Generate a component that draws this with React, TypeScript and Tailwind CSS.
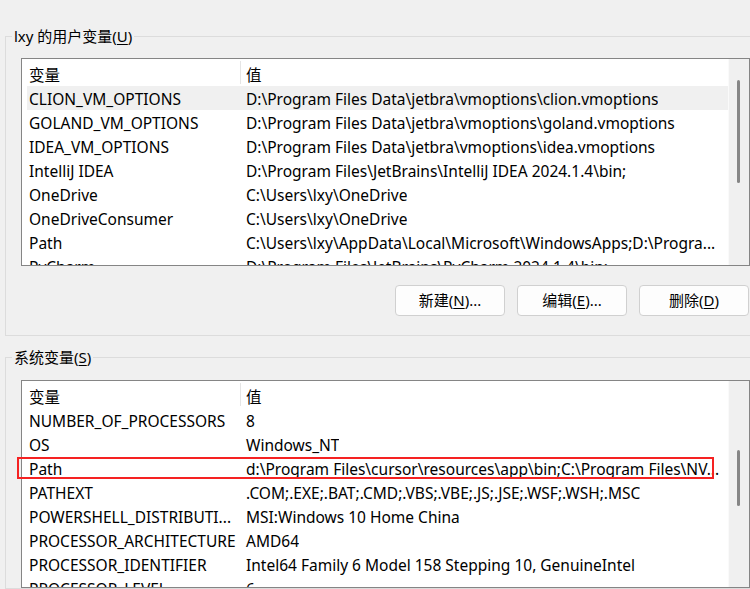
import React from 'react';

type Row = { name: string; value: string };

const userVars: Row[] = [
  { name: 'CLION_VM_OPTIONS', value: 'D:\\Program Files Data\\jetbra\\vmoptions\\clion.vmoptions' },
  { name: 'GOLAND_VM_OPTIONS', value: 'D:\\Program Files Data\\jetbra\\vmoptions\\goland.vmoptions' },
  { name: 'IDEA_VM_OPTIONS', value: 'D:\\Program Files Data\\jetbra\\vmoptions\\idea.vmoptions' },
  { name: 'IntelliJ IDEA', value: 'D:\\Program Files\\JetBrains\\IntelliJ IDEA 2024.1.4\\bin;' },
  { name: 'OneDrive', value: 'C:\\Users\\lxy\\OneDrive' },
  { name: 'OneDriveConsumer', value: 'C:\\Users\\lxy\\OneDrive' },
  { name: 'Path', value: 'C:\\Users\\lxy\\AppData\\Local\\Microsoft\\WindowsApps;D:\\Progra...' },
  { name: 'PyCharm', value: 'D:\\Program Files\\JetBrains\\PyCharm 2024.1.4\\bin;' },
];

const systemVars: Row[] = [
  { name: 'NUMBER_OF_PROCESSORS', value: '8' },
  { name: 'OS', value: 'Windows_NT' },
  { name: 'Path', value: 'd:\\Program Files\\cursor\\resources\\app\\bin;C:\\Program Files\\NV...' },
  { name: 'PATHEXT', value: '.COM;.EXE;.BAT;.CMD;.VBS;.VBE;.JS;.JSE;.WSF;.WSH;.MSC' },
  { name: 'POWERSHELL_DISTRIBUTI...', value: 'MSI:Windows 10 Home China' },
  { name: 'PROCESSOR_ARCHITECTURE', value: 'AMD64' },
  { name: 'PROCESSOR_IDENTIFIER', value: 'Intel64 Family 6 Model 158 Stepping 10, GenuineIntel' },
  { name: 'PROCESSOR_LEVEL', value: '6' },
];

const VarList = ({
  rows,
  selected,
  thumbTop,
  thumbHeight,
}: {
  rows: Row[];
  selected?: number;
  thumbTop: string;
  thumbHeight: string;
}) => (
  <div className="flex h-[208px] w-[729px] overflow-hidden border border-[#858585] bg-white">
    <div className="flex-1 overflow-hidden pl-[5px]">
      <div className="flex h-[27px] items-center">
        <div className="w-[213px] pl-[2px] pt-[6px] leading-[21px]">变量</div>
        <div className="h-[23px] w-px bg-[#e5e5e5]" />
        <div className="pl-[5px] pt-[6px] leading-[21px]">值</div>
      </div>
      {rows.map((row, i) => (
        <div
          key={row.name}
          className={`flex h-[24px] pt-[3px] leading-[21px] ${
            i === selected ? 'bg-[#f0f0f0]' : ''
          }`}
        >
          <div className="w-[213px] shrink-0 overflow-hidden whitespace-nowrap pl-[2px]">
            {row.name}
          </div>
          <div className="overflow-hidden whitespace-nowrap pl-[6px]">{row.value}</div>
        </div>
      ))}
    </div>
    <div className="w-[21px] shrink-0 border-l border-[#fafafa] bg-[#f0f0f0] pl-[8px]">
      <div className={`w-[3px] rounded-full bg-[#868686] ${thumbTop} ${thumbHeight}`} />
    </div>
  </div>
);

const Btn = ({ label, hot, tail }: { label: string; hot: string; tail: string }) => (
  <button className="h-[31px] w-[110px] rounded-[4px] border border-[#d0d0d0] bg-[#fdfdfd] text-[15px] text-black">
    {label}(<span className="underline underline-offset-2">{hot}</span>){tail}
  </button>
);

export default function App() {
  return (
    <div
      className="relative h-[589px] w-[750px] overflow-hidden bg-[#f0f0f0] text-[15.5px] text-black"
      style={{ fontFamily: '"Noto Sans", "Noto Sans CJK SC", sans-serif' }}
    >
      <fieldset className="ml-[5px] mt-[27px] w-[800px] border border-r-0 border-[#dcdcdc] pb-[19px] pl-[15px]">
        <legend className="-ml-[9px] px-[2px] text-[15px] leading-[18px]">
          lxy 的用户变量(<span className="underline underline-offset-2">U</span>)
        </legend>
        <div className="mt-[13px]">
          <VarList rows={userVars} selected={0} thumbTop="mt-[21px]" thumbHeight="h-[103px]" />
        </div>
        <div className="mt-[19px] flex w-[728px] justify-end gap-[12px]">
          <Btn label="新建" hot="N" tail="..." />
          <Btn label="编辑" hot="E" tail="..." />
          <Btn label="删除" hot="D" tail="" />
        </div>
      </fieldset>

      <fieldset className="ml-[5px] mt-[12px] w-[800px] border border-r-0 border-[#dcdcdc] pl-[15px]">
        <legend className="-ml-[9px] px-[2px] text-[15px] leading-[18px]">
          系统变量(<span className="underline underline-offset-2">S</span>)
        </legend>
        <div className="mt-[14px]">
          <VarList rows={systemVars} thumbTop="mt-[69px]" thumbHeight="h-[56px]" />
        </div>
      </fieldset>

      <div className="absolute left-[17px] top-[457px] h-[22px] w-[697px] border-2 border-[#f52222]" />
    </div>
  );
}
